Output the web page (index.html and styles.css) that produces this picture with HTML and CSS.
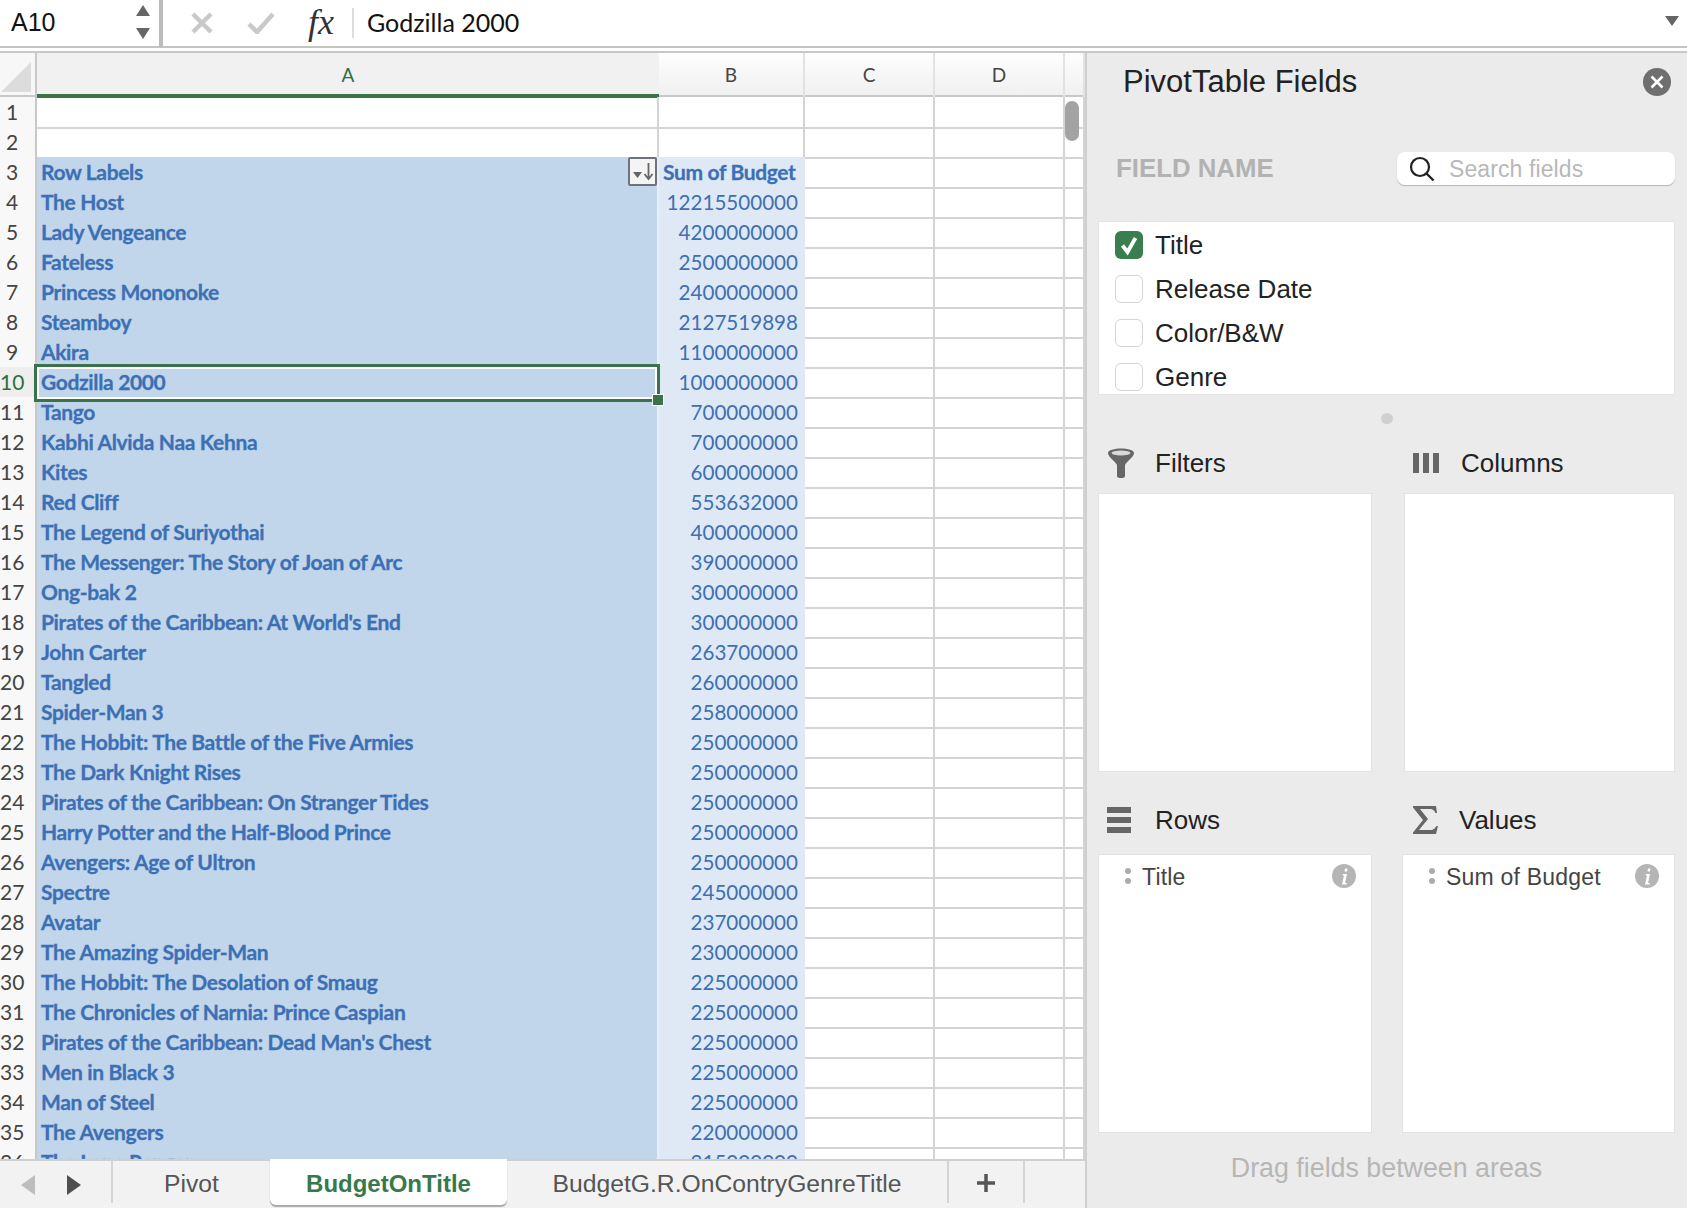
FILE: index.html
```html
<!DOCTYPE html>
<html lang="en">
<head>
<meta charset="utf-8">
<title>PivotTable</title>
<link rel="stylesheet" href="styles.css">
</head>
<body>
<header class="fbar">
  <div class="namebox">
    <span class="nameval">A10</span>
    <svg class="spin" width="16" height="36" viewBox="0 0 16 36"><path d="M8 1l7 11H1z" fill="#666"/><path d="M8 35L1 24h14z" fill="#666"/></svg>
  </div>
  <div class="fsplit"></div>
  <svg class="ficon-x" width="22" height="22" viewBox="0 0 22 22"><path d="M2 2l18 18M20 2L2 20" stroke="#c9c9c9" stroke-width="4.5" fill="none"/></svg>
  <svg class="ficon-c" width="28" height="22" viewBox="0 0 28 22"><path d="M2 12l8 8L26 2" stroke="#c9c9c9" stroke-width="4.5" fill="none"/></svg>
  <span class="fx">fx</span>
  <div class="fsep"></div>
  <div class="ftext">Godzilla 2000</div>
  <svg class="fdrop" width="14" height="10" viewBox="0 0 14 10"><path d="M0 0h14L7 10z" fill="#666"/></svg>
</header>
<main class="work">
  <section class="sheet">
    <div class="colhead">
      <div class="corner"><svg width="30" height="30" viewBox="0 0 30 30"><path d="M30 0v30H0z" fill="#dcdcdc"/></svg></div>
      <div class="ch ch-a">A</div><div class="ch">B</div><div class="ch">C</div><div class="ch">D</div><div class="ch"></div>
    </div>
    <div class="grid">
      <div class="row"><div class="rh">1</div><div class="c"></div><div class="c"></div><div class="c"></div><div class="c"></div><div class="c"></div></div>
      <div class="row"><div class="rh">2</div><div class="c"></div><div class="c"></div><div class="c"></div><div class="c"></div><div class="c"></div></div>
      <div class="row"><div class="rh">3</div><div class="c a head">Row Labels<span class="sortbtn"><svg width="24" height="20" viewBox="0 0 24 20"><path d="M2 10h9l-4.500 6z" fill="#666"/><path d="M17.500 1v15M13.500 12l4 5 4-5" stroke="#666" stroke-width="1.800" fill="none"/></svg></span></div><div class="c b head">Sum of Budget</div><div class="c"></div><div class="c"></div><div class="c"></div></div>
      <div class="row"><div class="rh">4</div><div class="c a">The Host</div><div class="c b">12215500000</div><div class="c"></div><div class="c"></div><div class="c"></div></div>
      <div class="row"><div class="rh">5</div><div class="c a">Lady Vengeance</div><div class="c b">4200000000</div><div class="c"></div><div class="c"></div><div class="c"></div></div>
      <div class="row"><div class="rh">6</div><div class="c a">Fateless</div><div class="c b">2500000000</div><div class="c"></div><div class="c"></div><div class="c"></div></div>
      <div class="row"><div class="rh">7</div><div class="c a">Princess Mononoke</div><div class="c b">2400000000</div><div class="c"></div><div class="c"></div><div class="c"></div></div>
      <div class="row"><div class="rh">8</div><div class="c a">Steamboy</div><div class="c b">2127519898</div><div class="c"></div><div class="c"></div><div class="c"></div></div>
      <div class="row"><div class="rh">9</div><div class="c a">Akira</div><div class="c b">1100000000</div><div class="c"></div><div class="c"></div><div class="c"></div></div>
      <div class="row"><div class="rh rh-sel">10</div><div class="c a sel">Godzilla 2000<span class="handle"></span></div><div class="c b">1000000000</div><div class="c"></div><div class="c"></div><div class="c"></div></div>
      <div class="row"><div class="rh">11</div><div class="c a">Tango</div><div class="c b">700000000</div><div class="c"></div><div class="c"></div><div class="c"></div></div>
      <div class="row"><div class="rh">12</div><div class="c a">Kabhi Alvida Naa Kehna</div><div class="c b">700000000</div><div class="c"></div><div class="c"></div><div class="c"></div></div>
      <div class="row"><div class="rh">13</div><div class="c a">Kites</div><div class="c b">600000000</div><div class="c"></div><div class="c"></div><div class="c"></div></div>
      <div class="row"><div class="rh">14</div><div class="c a">Red Cliff</div><div class="c b">553632000</div><div class="c"></div><div class="c"></div><div class="c"></div></div>
      <div class="row"><div class="rh">15</div><div class="c a">The Legend of Suriyothai</div><div class="c b">400000000</div><div class="c"></div><div class="c"></div><div class="c"></div></div>
      <div class="row"><div class="rh">16</div><div class="c a">The Messenger: The Story of Joan of Arc</div><div class="c b">390000000</div><div class="c"></div><div class="c"></div><div class="c"></div></div>
      <div class="row"><div class="rh">17</div><div class="c a">Ong-bak 2</div><div class="c b">300000000</div><div class="c"></div><div class="c"></div><div class="c"></div></div>
      <div class="row"><div class="rh">18</div><div class="c a">Pirates of the Caribbean: At World's End</div><div class="c b">300000000</div><div class="c"></div><div class="c"></div><div class="c"></div></div>
      <div class="row"><div class="rh">19</div><div class="c a">John Carter</div><div class="c b">263700000</div><div class="c"></div><div class="c"></div><div class="c"></div></div>
      <div class="row"><div class="rh">20</div><div class="c a">Tangled</div><div class="c b">260000000</div><div class="c"></div><div class="c"></div><div class="c"></div></div>
      <div class="row"><div class="rh">21</div><div class="c a">Spider-Man 3</div><div class="c b">258000000</div><div class="c"></div><div class="c"></div><div class="c"></div></div>
      <div class="row"><div class="rh">22</div><div class="c a">The Hobbit: The Battle of the Five Armies</div><div class="c b">250000000</div><div class="c"></div><div class="c"></div><div class="c"></div></div>
      <div class="row"><div class="rh">23</div><div class="c a">The Dark Knight Rises</div><div class="c b">250000000</div><div class="c"></div><div class="c"></div><div class="c"></div></div>
      <div class="row"><div class="rh">24</div><div class="c a">Pirates of the Caribbean: On Stranger Tides</div><div class="c b">250000000</div><div class="c"></div><div class="c"></div><div class="c"></div></div>
      <div class="row"><div class="rh">25</div><div class="c a">Harry Potter and the Half-Blood Prince</div><div class="c b">250000000</div><div class="c"></div><div class="c"></div><div class="c"></div></div>
      <div class="row"><div class="rh">26</div><div class="c a">Avengers: Age of Ultron</div><div class="c b">250000000</div><div class="c"></div><div class="c"></div><div class="c"></div></div>
      <div class="row"><div class="rh">27</div><div class="c a">Spectre</div><div class="c b">245000000</div><div class="c"></div><div class="c"></div><div class="c"></div></div>
      <div class="row"><div class="rh">28</div><div class="c a">Avatar</div><div class="c b">237000000</div><div class="c"></div><div class="c"></div><div class="c"></div></div>
      <div class="row"><div class="rh">29</div><div class="c a">The Amazing Spider-Man</div><div class="c b">230000000</div><div class="c"></div><div class="c"></div><div class="c"></div></div>
      <div class="row"><div class="rh">30</div><div class="c a">The Hobbit: The Desolation of Smaug</div><div class="c b">225000000</div><div class="c"></div><div class="c"></div><div class="c"></div></div>
      <div class="row"><div class="rh">31</div><div class="c a">The Chronicles of Narnia: Prince Caspian</div><div class="c b">225000000</div><div class="c"></div><div class="c"></div><div class="c"></div></div>
      <div class="row"><div class="rh">32</div><div class="c a">Pirates of the Caribbean: Dead Man's Chest</div><div class="c b">225000000</div><div class="c"></div><div class="c"></div><div class="c"></div></div>
      <div class="row"><div class="rh">33</div><div class="c a">Men in Black 3</div><div class="c b">225000000</div><div class="c"></div><div class="c"></div><div class="c"></div></div>
      <div class="row"><div class="rh">34</div><div class="c a">Man of Steel</div><div class="c b">225000000</div><div class="c"></div><div class="c"></div><div class="c"></div></div>
      <div class="row"><div class="rh">35</div><div class="c a">The Avengers</div><div class="c b">220000000</div><div class="c"></div><div class="c"></div><div class="c"></div></div>
      <div class="row"><div class="rh">36</div><div class="c a">The Lone Ranger</div><div class="c b">215000000</div><div class="c"></div><div class="c"></div><div class="c"></div></div>
      <div class="scrollthumb"></div>
    </div>
    <nav class="tabs">
      <svg class="tab-arrow-l" width="14" height="20" viewBox="0 0 14 20"><path d="M14 0v20L0 10z" fill="#bdbdbd"/></svg>
      <svg class="tab-arrow-r" width="14" height="20" viewBox="0 0 14 20"><path d="M0 0v20l14-10z" fill="#4f4f4f"/></svg>
      <div class="tab tab-pivot">Pivot</div>
      <div class="tab tab-active">BudgetOnTitle</div>
      <div class="tab tab-long">BudgetG.R.OnContryGenreTitle</div>
      <div class="tab tab-plus"><svg width="20" height="20" viewBox="0 0 20 20"><path d="M10 1v18M1 10h18" stroke="#555" stroke-width="3.500" fill="none"/></svg></div>
    </nav>
  </section>
  <aside class="panel">
    <div class="phead">
      <h1 class="ptitle">PivotTable Fields</h1>
      <svg class="pclose" width="28" height="28" viewBox="0 0 28 28"><circle cx="14" cy="14" r="14" fill="#6f6f6f"/><path d="M8.500 8.500l11 11M19.500 8.500l-11 11" stroke="#fff" stroke-width="2.600" fill="none"/></svg>
    </div>
    <div class="fieldrow">
      <div class="fieldname">FIELD NAME</div>
      <div class="search">
        <svg width="26" height="26" viewBox="0 0 26 26"><circle cx="11" cy="11" r="9" stroke="#222" stroke-width="2.200" fill="none"/><path d="M17.500 17.500l7 7" stroke="#222" stroke-width="2.400" fill="none"/></svg>
        <span class="searchtext">Search fields</span>
      </div>
    </div>
    <div class="fieldlist">
      <div class="fitem"><svg class="chk" width="28" height="28" viewBox="0 0 28 28"><rect width="28" height="28" rx="6" fill="#3a7d4f"/><path d="M7.500 14.500l5 6.500 8-14" stroke="#fff" stroke-width="3.800" fill="none"/></svg>Title</div>
      <div class="fitem"><span class="box"></span>Release Date</div>
      <div class="fitem"><span class="box"></span>Color/B&amp;W</div>
      <div class="fitem"><span class="box"></span>Genre</div>
    </div>
    <div class="sash"></div>
    <div class="areas">
      <div class="area">
        <div class="ahead">
          <span class="aicon"><svg width="28" height="30" viewBox="0 0 28 30"><path d="M1 5C1-1 27-1 27 5c0 4-7 8-9 12v11q0 2-4 2t-4-2V17C8 13 1 9 1 5z" fill="#666"/><ellipse cx="14" cy="5" rx="9.500" ry="2.500" fill="#d9d9d9"/></svg></span>Filters
        </div>
        <div class="abox"></div>
      </div>
      <div class="area">
        <div class="ahead ahead-cols">
          <span class="aicon"><svg width="26" height="20" viewBox="0 0 26 20"><path d="M0 0h6v20H0zM10 0h6v20h-6zM20 0h6v20h-6z" fill="#666"/></svg></span>Columns
        </div>
        <div class="abox abox-cols"></div>
      </div>
      <div class="area area-low">
        <div class="ahead">
          <span class="aicon"><svg width="24" height="26" viewBox="0 0 24 26"><path d="M0 0h24v6H0zM0 10h24v6H0zM0 20h24v6H0z" fill="#666"/></svg></span>Rows
        </div>
        <div class="abox">
          <div class="chip"><span class="dots"><i></i><i></i></span><span class="chiptext">Title</span><svg width="24" height="24" viewBox="0 0 24 24"><circle cx="12" cy="12" r="12" fill="#b5b5b5"/><path d="M13 4.500h2.500L15 7.500h-2.500zM11 10h4l-2 9h2l-.5 1.500H10l2-9h-1.500z" fill="#fff"/></svg></div>
        </div>
      </div>
      <div class="area area-low">
        <div class="ahead ahead-vals">
          <span class="aicon"><svg width="25" height="28" viewBox="0 0 25 28"><path d="M1 0h22l1 7h-1.500C21 4 20 3 16 3H7l8 10-9 11h11c4 0 5-2 6.500-4H25l-2 8H0v-1.500L10 14 0 1.500V0z" fill="#666"/></svg></span>Values
        </div>
        <div class="abox abox-vals">
          <div class="chip"><span class="dots"><i></i><i></i></span><span class="chiptext">Sum of Budget</span><svg width="24" height="24" viewBox="0 0 24 24"><circle cx="12" cy="12" r="12" fill="#b5b5b5"/><path d="M13 4.500h2.500L15 7.500h-2.500zM11 10h4l-2 9h2l-.5 1.500H10l2-9h-1.500z" fill="#fff"/></svg></div>
        </div>
      </div>
    </div>
    <div class="dragnote">Drag fields between areas</div>
  </aside>
</main>
</body>
</html>
```
FILE: styles.css
```css
* { box-sizing: border-box; }
html, body { margin: 0; padding: 0; }
body {
  width: 1687px;
  height: 1208px;
  overflow: hidden;
  display: flex;
  flex-direction: column;
  background: #fff;
  font-family: "Liberation Sans", Arial, sans-serif;
  color: #222;
}

/* formula bar */
.fbar {
  height: 53px;
  flex: none;
  display: flex;
  align-items: flex-start;
  background: #fff;
  border-bottom: 2px solid #c8c8c8;
  box-shadow: inset 0 -3px 0 #fff, inset 0 -5px 0 #c4c4c4;
}
.namebox {
  width: 159px;
  height: 46px;
  display: flex;
  align-items: flex-start;
  justify-content: space-between;
  padding: 5px 8px 0 11px;
}
.nameval { font-size: 25px; line-height: 34px; color: #111; }
.spin { margin-top: -1px; }
.fsplit { width: 4px; height: 47px; background: #bcbcbc; }
.ficon-x { margin: 12px 0 0 28px; }
.ficon-c { margin: 12px 0 0 34px; }
.fx {
  margin: 3px 0 0 33px;
  font-family: "Liberation Serif", serif;
  font-style: italic;
  font-size: 36px;
  line-height: 38px;
  width: 28px;
  color: #333;
}
.fsep { width: 2px; height: 30px; margin: 8px 0 0 16px; background: #dcdcdc; }
.ftext {
  margin: 4px 0 0 13px;
  font-family: Lato, sans-serif;
  font-size: 25px;
  line-height: 36px;
  flex: 1;
  color: #111;
}
.fdrop { margin: 16px 8px 0 0; }

/* layout */
.work { flex: 1; display: flex; min-height: 0; }
.sheet { width: 1085px; flex: none; display: flex; flex-direction: column; min-height: 0; }

/* column header */
.colhead {
  height: 44px;
  flex: none;
  display: grid;
  grid-template-columns: 37px 622px 146px 130px 130px 20px;
  background: linear-gradient(#fefefe, #f0f0f0);
  border-bottom: 2px solid #c8c8c8;
}
.corner { height: 42px; padding: 9px 0 0 1px; border-right: 2px solid #c8c8c8; background: #f7f7f7; }
.corner svg { display: block; }
.ch {
  border-right: 2px solid #e2e2e2;
  text-align: center;
  font-family: Lato, sans-serif;
  font-size: 19px;
  line-height: 44px;
  color: #444;
}
.ch-a {
  background: #f1f1f1;
  color: #2f6e45;
  height: 45px;
  border-right: 0;
  border-bottom: 4px solid #3a7349;
}

/* grid */
.grid { position: relative; flex: 1; overflow: hidden; min-height: 0; }
.row {
  display: grid;
  grid-template-columns: 37px 622px 146px 130px 130px 20px;
  height: 30px;
}
.rh {
  background: #f8f8f8;
  border-right: 2px solid #c8c8c8;
  border-bottom: 2px solid #dcdcdc;
  padding-right: 11px;
  text-align: center;
  font-family: Lato, sans-serif;
  font-size: 21px;
  line-height: 30px;
  color: #444;
  white-space: nowrap;
}
.rh-sel { color: #2f6e45; background: #eeeeee; }
.c {
  border-right: 2px solid #d4d4d4;
  border-bottom: 2px solid #d4d4d4;
  font-family: Lato, sans-serif;
  font-size: 20.600px;
  line-height: 30px;
  white-space: nowrap;
  color: #3c70b4;
}
.a {
  background: #c1d5eb;
  border-right: 2px solid #e8eff8;
  border-bottom: 0;
  padding-left: 4px;
  font-weight: 700;
  font-size: 21px;
  letter-spacing: -0.350px;
  line-height: 30px;
  -webkit-text-stroke: 0.3px #3c70b4;
  position: relative;
}
.b {
  background: #dfe9f6;
  border-right: 0;
  border-bottom: 0;
  text-align: right;
  padding-right: 7px;
}
.head { border-bottom: 2px solid #f2f6fb; line-height: 30px; }
.b.head {
  text-align: left;
  padding-left: 4px;
  font-weight: 700;
  font-size: 21px;
  letter-spacing: -0.350px;
  -webkit-text-stroke: 0.3px #3c70b4;
}
.sortbtn {
  position: absolute;
  right: 0;
  top: 0;
  width: 29px;
  height: 29px;
  display: flex;
  align-items: center;
  justify-content: center;
  background: #f4f4f4;
  border: 2px solid #6d7379;
  border-radius: 2px;
}
.sel {
  z-index: 2;
  margin-right: 2px;
  outline: 3px solid #3a7349;
  outline-offset: 0;
  border-right: 0;
  box-shadow: inset 0 0 0 2px #fff;
}
.handle {
  position: absolute;
  right: -6px;
  bottom: -6px;
  width: 10px;
  height: 10px;
  background: #3a7349;
  box-shadow: 0 0 0 1px #fff;
}
.scrollthumb {
  position: absolute;
  left: 1065px;
  top: 4px;
  width: 14px;
  height: 40px;
  border-radius: 7px;
  background: #a3a3a3;
}

/* tabs */
.tabs {
  flex: none;
  height: 49px;
  display: flex;
  align-items: flex-start;
  background: #f2f2f2;
  border-top: 2px solid #cfcfcf;
  font-size: 24.700px;
  color: #555;
  position: relative;
}
.tab-arrow-l { margin: 14px 0 0 21px; }
.tab-arrow-r { margin: 14px 0 0 32px; }
.tab { height: 42px; line-height: 46px; text-align: center; white-space: nowrap; }
.tab-pivot { width: 159px; margin-left: 30px; border-left: 2px solid #d4d4d4; }
.tab-active {
  width: 237px;
  height: 46px;
  margin-top: -2px;
  background: #fff;
  border-radius: 0 0 6px 6px;
  box-shadow: 0 2px 1px #a8a8a8;
  color: #37794b;
  font-weight: 700;
  line-height: 50px;
  font-size: 24px;
}
.tab-long { width: 442px; border-right: 2px solid #d4d4d4; }
.tab-plus { width: 76px; padding-top: 2px; display: flex; align-items: center; justify-content: center; border-right: 2px solid #d4d4d4; }

/* panel */
.panel {
  flex: 1;
  min-width: 0;
  background: #ebebeb;
  border-left: 2px solid #cfcfcf;
  padding: 0 12px 0 11px;
  display: flex;
  flex-direction: column;
}
.phead { height: 58px; display: flex; align-items: flex-end; justify-content: space-between; padding: 0 4px 14px 25px; }
.ptitle { margin: 0; font-size: 31px; font-weight: 400; line-height: 30px; color: #222; }
.pclose { margin-bottom: 1px; }
.fieldrow { margin-top: 41px; display: flex; align-items: center; justify-content: space-between; padding-left: 18px; }
.fieldname { font-size: 25.800px; font-weight: 700; color: #b2b2b2; }
.search {
  width: 278px;
  height: 33px;
  display: flex;
  align-items: center;
  gap: 14px;
  padding-left: 12px;
  background: #fff;
  border-radius: 8px;
  box-shadow: 0 1px 1px #b5b5b5;
}
.searchtext { font-size: 23px; line-height: 30px; color: #b8b8b8; letter-spacing: 0.100px; }
.fieldlist {
  margin-top: 36px;
  height: 174px;
  background: #fff;
  padding: 9px 0 0 16px;
  border: 1px solid #e2e2e2;
  overflow: hidden;
}
.fitem { height: 44px; display: flex; align-items: flex-start; gap: 12px; font-size: 26px; line-height: 28px; color: #222; }
.chk { flex: none; }
.box {
  width: 28px;
  height: 28px;
  flex: none;
  background: #fff;
  border: 1px solid #d4d4d4;
  border-radius: 6px;
}
.sash { width: 12px; height: 11px; margin: 18px auto 0; border-radius: 50%; background: #d0d0d0; }
.areas { display: grid; grid-template-columns: 274px 271px; column-gap: 32px; }
.ahead { height: 40px; margin-top: 19px; margin-bottom: 10px; display: flex; align-items: center; font-size: 26px; color: #222; }
.aicon { width: 57px; padding-left: 9px; flex: none; display: flex; align-items: center; }
.ahead-vals .aicon { width: 55px; }
.area-low .ahead { margin-top: 28px; margin-bottom: 14px; }
.abox { height: 279px; background: #fff; border: 1px solid #e2e2e2; }
.abox-vals { margin-left: -2px; }
.chip {
  display: flex;
  align-items: center;
  height: 24px;
  margin-top: 9px;
  padding: 0 15px 0 26px;
  font-size: 23px;
  color: #444;
}
.chiptext { flex: 1; margin-left: 11px; padding-top: 2px; letter-spacing: 0.200px; }
.dots { display: flex; flex-direction: column; gap: 4px; }
.dots i { display: block; width: 6px; height: 6px; border-radius: 50%; background: #aaa; }
.dragnote { margin-top: 20px; height: 30px; line-height: 30px; text-align: center; font-size: 26.800px; color: #b6b6b6; }
```
